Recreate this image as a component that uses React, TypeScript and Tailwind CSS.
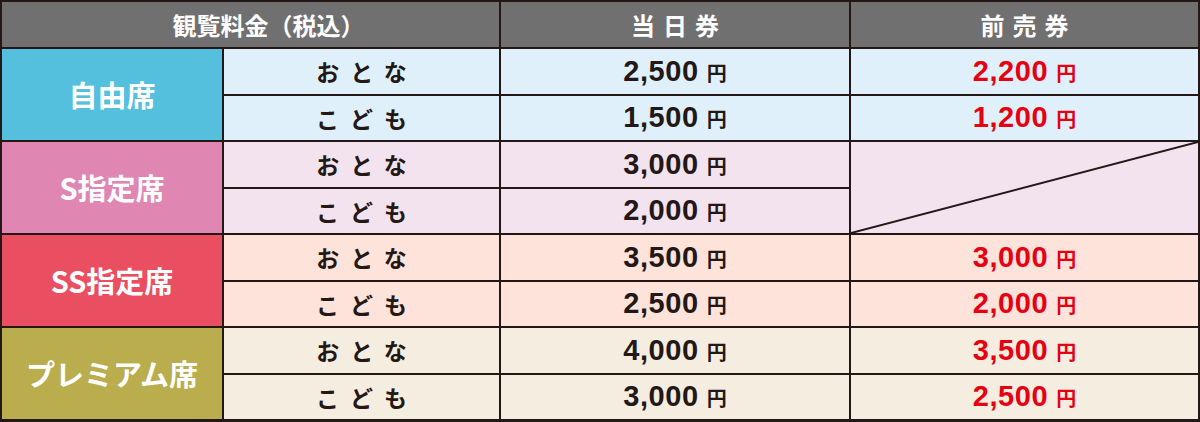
import { Fragment } from "react";

type Row = { type: string; today: string; advance: string | null };

type Group = {
  label: string;
  color: string;
  light: string;
  rows: Row[];
};

const groups: Group[] = [
  {
    label: "自由席",
    color: "bg-[#55c0de]",
    light: "bg-[#dff0fb]",
    rows: [
      { type: "おとな", today: "2,500", advance: "2,200" },
      { type: "こども", today: "1,500", advance: "1,200" },
    ],
  },
  {
    label: "S指定席",
    color: "bg-[#df86b3]",
    light: "bg-[#f2e3ee]",
    rows: [
      { type: "おとな", today: "3,000", advance: null },
      { type: "こども", today: "2,000", advance: null },
    ],
  },
  {
    label: "SS指定席",
    color: "bg-[#e94f60]",
    light: "bg-[#fde3da]",
    rows: [
      { type: "おとな", today: "3,500", advance: "3,000" },
      { type: "こども", today: "2,500", advance: "2,000" },
    ],
  },
  {
    label: "プレミアム席",
    color: "bg-[#b9ad4d]",
    light: "bg-[#f4ede0]",
    rows: [
      { type: "おとな", today: "4,000", advance: "3,500" },
      { type: "こども", today: "3,000", advance: "2,500" },
    ],
  },
];

const jp = "font-['Noto_Sans_CJK_JP',sans-serif]";

const Price = ({ value, red }: { value: string; red?: boolean }) => (
  <div className={`flex items-baseline justify-center ${red ? "text-[#e60012]" : "text-[#231815]"}`}>
    <span className="font-['Liberation_Sans',Arial,sans-serif] text-[29px] font-bold leading-none tracking-[0.02em]">
      {value}
    </span>
    <span className={`${jp} ml-[8px] text-[20px] font-bold leading-none`}>円</span>
  </div>
);

export default function App() {
  return (
    <div className="grid h-[422px] w-[1200px] grid-cols-[220px_275px_348px_347px] grid-rows-[45px_repeat(8,minmax(0,1fr))] gap-[2px] bg-[#231815] p-[2px] pb-[3px]">
      {/* header */}
      <div className={`${jp} col-span-2 flex items-center justify-center bg-[#717071] pl-[36px] text-[24px] font-bold text-white`}>
        観覧料金（税込）
      </div>
      <div className={`${jp} flex items-center justify-center bg-[#717071] pl-[8px] text-[24px] font-bold tracking-[8px] text-white`}>
        当日券
      </div>
      <div className={`${jp} flex items-center justify-center bg-[#717071] pl-[8px] text-[24px] font-bold tracking-[8px] text-white`}>
        前売券
      </div>

      {groups.map((g) => (
        <Fragment key={g.label}>
          <div className={`${jp} ${g.color} row-span-2 flex items-center justify-center text-[29px] font-bold text-white`}>
            {g.label}
          </div>
          {g.rows.map((r, i) => (
            <Fragment key={r.type}>
              <div
                className={`${jp} ${g.light} flex items-center justify-center pl-[11px] text-[23px] font-bold tracking-[11px] text-[#231815]`}
              >
                {r.type}
              </div>
              <div className={`${g.light} flex items-center justify-center`}>
                <Price value={r.today} />
              </div>
              {r.advance ? (
                <div className={`${g.light} flex items-center justify-center`}>
                  <Price value={r.advance} red />
                </div>
              ) : i === 0 ? (
                <div className={`${g.light} relative row-span-2`}>
                  <svg className="absolute inset-0 h-full w-full" viewBox="0 0 100 100" preserveAspectRatio="none">
                    <line x1="0" y1="100" x2="100" y2="0" stroke="#231815" strokeWidth="2" vectorEffect="non-scaling-stroke" />
                  </svg>
                </div>
              ) : null}
            </Fragment>
          ))}
        </Fragment>
      ))}
    </div>
  );
}
